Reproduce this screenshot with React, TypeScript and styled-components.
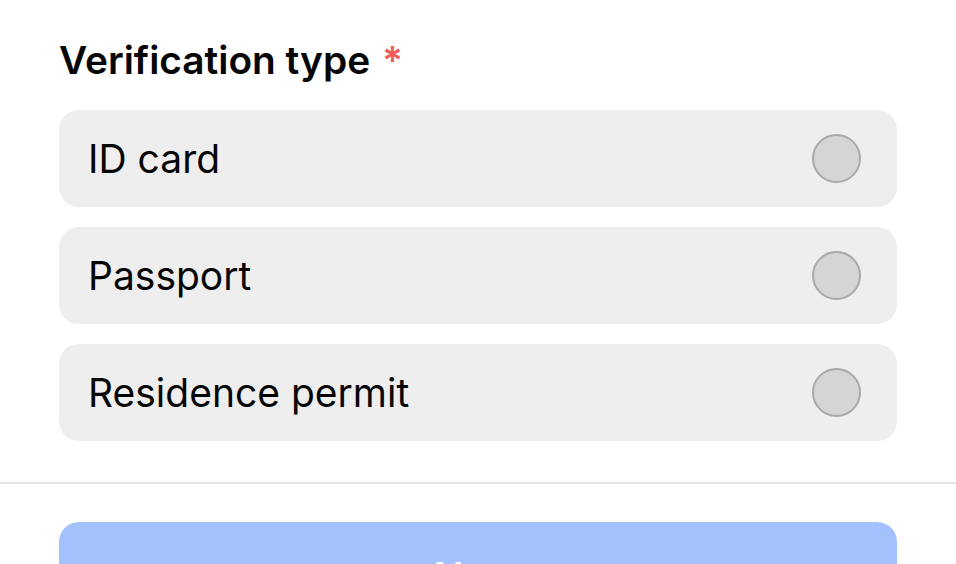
import React from "react";
import styled, { createGlobalStyle } from "styled-components";

const Global = createGlobalStyle`
  html, body { margin: 0; padding: 0; background: #ffffff; }
  body { font-family: Inter, "Noto Sans", sans-serif; overflow: hidden; }
`;

const Page = styled.div`
  width: 956px;
  height: 564px;
  display: flex;
  flex-direction: column;
  overflow: hidden;
  & > * { flex-shrink: 0; }
`;

const Section = styled.div`
  display: flex;
  flex-direction: column;
  padding: 37px 59px 41px 59px;
`;

const Label = styled.div`
  font-size: 38.8px;
  line-height: 46px;
  font-weight: 600;
  color: #050505;
  margin-bottom: 27px;
`;

const Required = styled.span`
  color: #ef5b5b;
  margin-left: 12px;
`;

const Options = styled.div`
  display: flex;
  flex-direction: column;
  gap: 20px;
`;

const Option = styled.label`
  height: 97px;
  box-sizing: border-box;
  display: flex;
  align-items: center;
  justify-content: space-between;
  padding: 0 36px 0 29px;
  background: #eeeeee;
  border-radius: 20px;
  cursor: pointer;
`;

const OptionText = styled.span`
  font-size: 39px;
  font-weight: 400;
  color: #050505;
`;

const Radio = styled.span`
  width: 49px;
  height: 49px;
  box-sizing: border-box;
  border-radius: 50%;
  border: 2px solid #a9a9ab;
  background: #d5d5d7;
`;

const Divider = styled.div`
  height: 2px;
  background: #e4e4e4;
`;

const Footer = styled.div`
  padding: 38px 59px 0 59px;
`;

const NextButton = styled.button`
  width: 100%;
  height: 108px;
  border: none;
  border-radius: 20px;
  background: #a3c2fd;
  color: #ffffff;
  font-family: Inter, "Noto Sans", sans-serif;
  font-size: 39px;
  font-weight: 600;
  display: flex;
  align-items: center;
  justify-content: center;
`;

const options = ["ID card", "Passport", "Residence permit"];

export default function App() {
  return (
    <Page>
      <Global />
      <Section>
        <Label>
          Verification type<Required>*</Required>
        </Label>
        <Options>
          {options.map((o) => (
            <Option key={o}>
              <OptionText>{o}</OptionText>
              <Radio />
            </Option>
          ))}
        </Options>
      </Section>
      <Divider />
      <Footer>
        <NextButton>Next</NextButton>
      </Footer>
    </Page>
  );
}
